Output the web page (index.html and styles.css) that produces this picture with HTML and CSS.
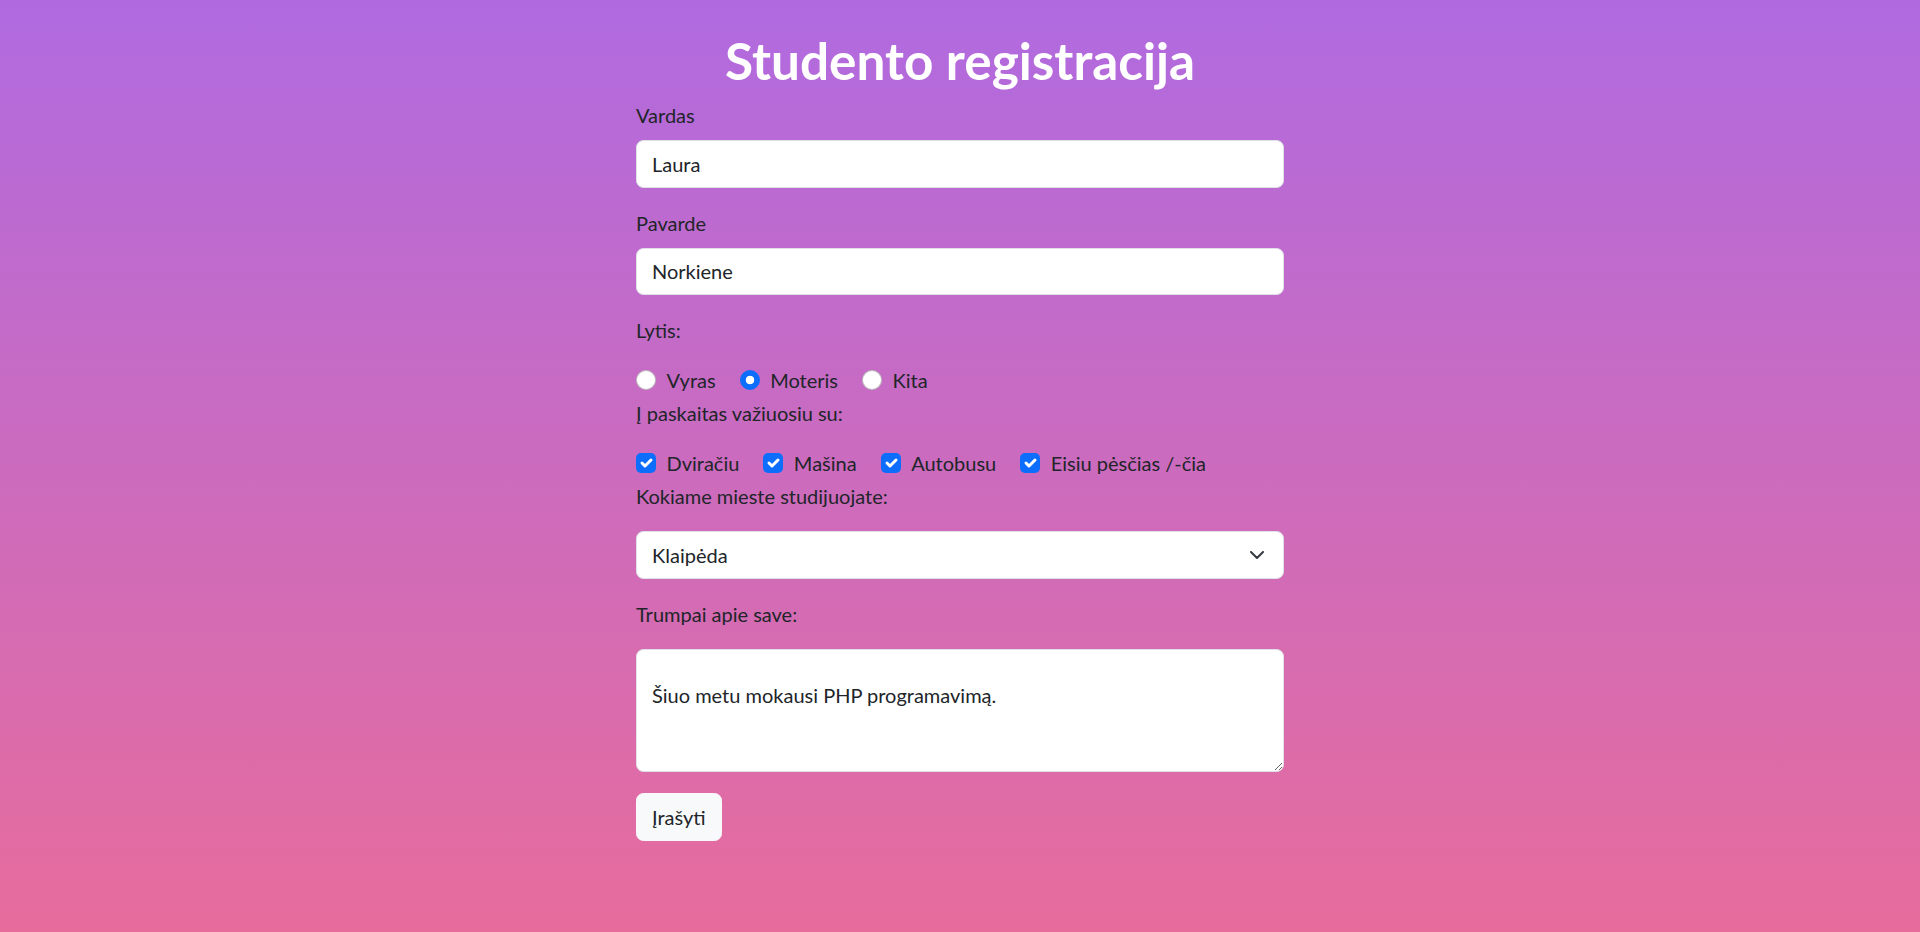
FILE: index.html
```html
<!DOCTYPE html>
<html lang="lt">
<head>
<meta charset="utf-8">
<title>Studento registracija</title>
<link rel="stylesheet" href="styles.css">
</head>
<body>
<main class="page">
  <h1 class="title">Studento registracija</h1>
  <form class="form">
    <label class="field-label" for="vardas">Vardas</label>
    <input class="control" id="vardas" type="text" value="Laura">

    <label class="field-label" for="pavarde">Pavarde</label>
    <input class="control" id="pavarde" type="text" value="Norkiene">

    <div class="group-label">Lytis:</div>
    <div class="options">
      <span class="option"><span class="radio"></span>Vyras</span>
      <span class="option"><span class="radio checked"></span>Moteris</span>
      <span class="option"><span class="radio"></span>Kita</span>
    </div>

    <div class="group-label">Į paskaitas važiuosiu su:</div>
    <div class="options">
      <span class="option"><span class="checkbox"><svg viewBox="0 0 20 20" width="20" height="20"><path d="m6 10 3 3 6-6" fill="none" stroke="#fff" stroke-width="3" stroke-linecap="round" stroke-linejoin="round"/></svg></span>Dviračiu</span>
      <span class="option"><span class="checkbox"><svg viewBox="0 0 20 20" width="20" height="20"><path d="m6 10 3 3 6-6" fill="none" stroke="#fff" stroke-width="3" stroke-linecap="round" stroke-linejoin="round"/></svg></span>Mašina</span>
      <span class="option"><span class="checkbox"><svg viewBox="0 0 20 20" width="20" height="20"><path d="m6 10 3 3 6-6" fill="none" stroke="#fff" stroke-width="3" stroke-linecap="round" stroke-linejoin="round"/></svg></span>Autobusu</span>
      <span class="option"><span class="checkbox"><svg viewBox="0 0 20 20" width="20" height="20"><path d="m6 10 3 3 6-6" fill="none" stroke="#fff" stroke-width="3" stroke-linecap="round" stroke-linejoin="round"/></svg></span>Eisiu pėsčias /-čia</span>
    </div>

    <div class="group-label">Kokiame mieste studijuojate:</div>
    <div class="select">
      <span>Klaipėda</span>
      <svg class="chevron" viewBox="0 0 14 8" width="14" height="8"><path d="M1 1l6 6 6-6" fill="none" stroke="#343a40" stroke-width="2" stroke-linecap="round" stroke-linejoin="round"/></svg>
    </div>

    <div class="group-label">Trumpai apie save:</div>
    <textarea class="textarea">Šiuo metu mokausi PHP programavimą.</textarea>

    <button class="btn" type="button">Įrašyti</button>
  </form>
</main>
</body>
</html>
```

FILE: styles.css
```css
html {
  min-height: 100%;
}

body {
  margin: 0;
  min-height: 100vh;
  background: linear-gradient(to bottom, #b06ae0 0%, #e76c9c 100%);
  font-family: "Lato", "Open Sans", sans-serif;
  font-size: 20px;
  line-height: 30px;
  color: #212529;
}

.page {
  padding-top: 30px;
}

.title {
  margin: 0 0 10px;
  text-align: center;
  color: #fff;
  font-size: 51.3px;
  line-height: 60px;
  font-weight: 700;
}

.form {
  width: 648px;
  margin: 0 auto;
}

.field-label {
  display: block;
  margin-bottom: 10px;
}

.control {
  display: block;
  width: 100%;
  box-sizing: border-box;
  padding: 7.75px 15px;
  margin: 0 0 20px;
  font: inherit;
  line-height: 30px;
  color: #212529;
  background: #fff;
  border: 1px solid #dee2e6;
  border-radius: 7.5px;
  outline: none;
}

.group-label {
  margin-bottom: 20px;
}

.options {
  display: flex;
  align-items: flex-start;
  height: 33px;
}

.option {
  display: flex;
  align-items: flex-start;
  margin-right: 24px;
}

.radio,
.checkbox {
  flex: none;
  width: 20px;
  height: 20px;
  box-sizing: border-box;
  margin-top: 5px;
  margin-right: 10.5px;
}

.radio {
  border-radius: 50%;
  background: #fff;
  border: 1px solid rgba(0, 0, 0, 0.25);
}

.radio.checked {
  border-color: #0d6efd;
  background: radial-gradient(circle, #fff 0, #fff 4px, #0d6efd 4.6px);
}

.checkbox {
  border-radius: 5px;
  background: #0d6efd;
}

.checkbox svg {
  display: block;
}

.select {
  display: flex;
  justify-content: space-between;
  align-items: center;
  padding: 7.75px 19px 7.75px 15px;
  margin-bottom: 20px;
  background: #fff;
  border: 1px solid #dee2e6;
  border-radius: 7.5px;
}

.chevron {
  display: block;
}

.textarea {
  display: block;
  width: 100%;
  height: 123.5px;
  box-sizing: border-box;
  padding: 30px 15px 7.5px;
  margin: 0 0 21px;
  font: inherit;
  line-height: 30px;
  color: #212529;
  background: #fff;
  border: 1px solid #dee2e6;
  border-radius: 7.5px;
  resize: vertical;
  outline: none;
}

.btn {
  display: inline-block;
  padding: 7.75px 15px;
  font: inherit;
  line-height: 30px;
  color: #212529;
  background: #f8f9fa;
  border: 1px solid #f8f9fa;
  border-radius: 7.5px;
}
```
